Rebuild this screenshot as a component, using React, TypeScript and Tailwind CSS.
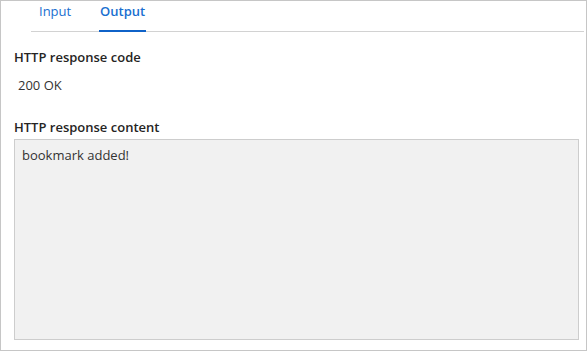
import React from "react";

export default function App() {
  return (
    <div
      className="w-[587px] h-[351px] border border-[#c6c6c6] bg-white flex flex-col"
      style={{ fontFamily: "'Open Sans', 'Noto Sans', sans-serif" }}
    >
      <div className="ml-[30px] mr-[2px] flex border-b border-[#d2d2d2] h-[31px] text-[13px]">
        <div className="px-[8px] pt-[1px] text-[#1a6fd0]">Input</div>
        <div className="ml-[20px] pt-[1px] font-semibold text-[#1a6fd0] relative w-[47px] text-center">
          Output
          <div className="absolute left-0 right-0 -bottom-[1px] h-[2px] bg-[#0f62c8]" />
        </div>
      </div>
      <div className="flex flex-col pl-[13px] pr-[7px] flex-1 pb-[10px]">
        <div className="mt-[16px] text-[13px] font-semibold text-[#252423]">HTTP response code</div>
        <div className="mt-[8px] ml-[4px] text-[13px] text-[#333]">200 OK</div>
        <div className="mt-[23px] text-[13px] font-semibold text-[#252423]">HTTP response content</div>
        <div className="mt-[1px] flex-1 border border-[#cdcdcd] bg-[#f1f1f1] px-[7px] pt-[6px] text-[13px] text-[#333]">
          bookmark added!
        </div>
      </div>
    </div>
  );
}
